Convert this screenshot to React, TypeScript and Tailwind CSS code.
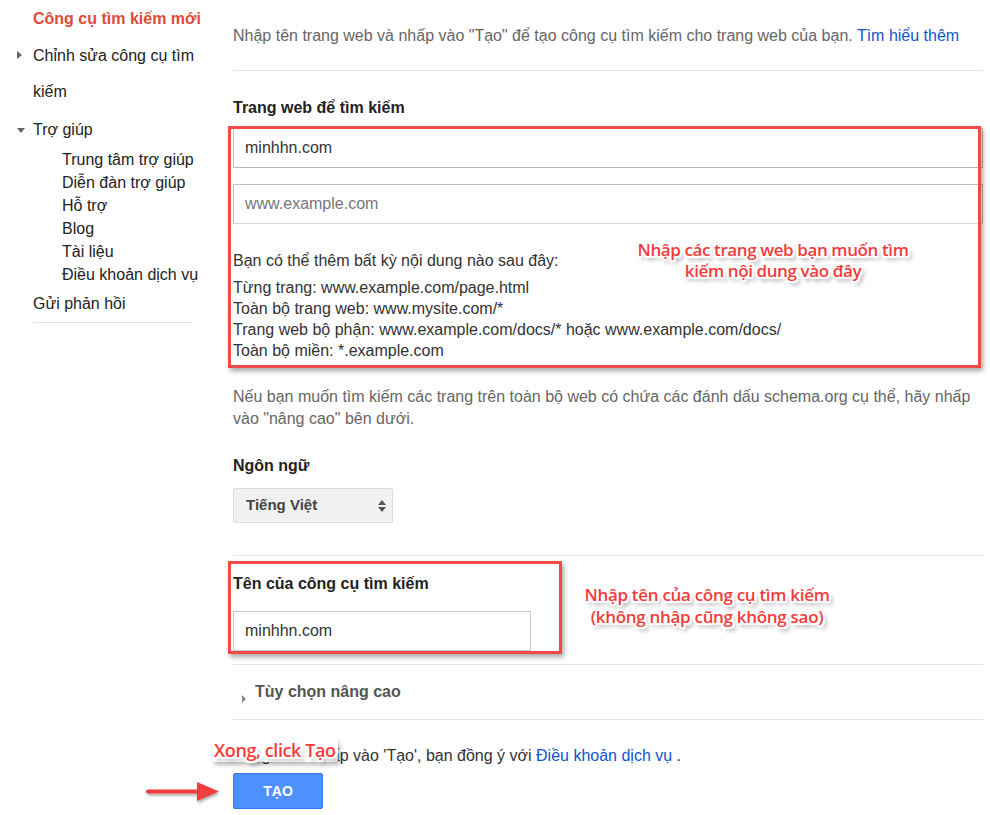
import { Fragment } from "react";

const HELP_LINKS = [
  "Trung tâm trợ giúp",
  "Diễn đàn trợ giúp",
  "Hỗ trợ",
  "Blog",
  "Tài liệu",
  "Điều khoản dịch vụ",
];

const EXAMPLES = [
  "Từng trang: www.example.com/page.html",
  "Toàn bộ trang web: www.mysite.com/*",
  "Trang web bộ phận: www.example.com/docs/* hoặc www.example.com/docs/",
  "Toàn bộ miền: *.example.com",
];

// white halo + soft drop shadow, like the screenshot annotations
const glow =
  "[text-shadow:0_0_1px_#fff,0_0_2px_#fff,2px_0_1px_#fff,-2px_0_1px_#fff,0_2px_1px_#fff,0_-2px_1px_#fff,2px_2px_1px_#fff,-2px_-2px_1px_#fff,2px_-2px_1px_#fff,-2px_2px_1px_#fff,3px_4px_4px_rgba(0,0,0,0.45)]";

function Note({ lines, className }: { lines: string[]; className: string }) {
  return (
    <div
      className={`absolute text-center font-semibold text-[#f23c3c] font-['Open_Sans',sans-serif] whitespace-nowrap ${glow} ${className}`}
    >
      {lines.map((l, i) => (
        <Fragment key={i}>
          {l}
          {i < lines.length - 1 && <br />}
        </Fragment>
      ))}
    </div>
  );
}

function RedBox({ className }: { className: string }) {
  return (
    <div
      className={`absolute border-[3px] border-[#f24848] shadow-[2px_3px_5px_rgba(0,0,0,0.35)] pointer-events-none ${className}`}
    />
  );
}

export default function App() {
  return (
    <div className="w-[990px] h-[815px] bg-white flex font-['Liberation_Sans',Arial,sans-serif] text-[#222] overflow-hidden">
      {/* Sidebar */}
      <div className="w-[233px] shrink-0 pl-[33px] pr-[28px] pt-px">
        <div className="text-[16px] leading-[36px] font-bold text-[#dd4b39]">
          Công cụ tìm kiếm mới
        </div>
        <div className="relative text-[16px] leading-[36px] mt-px">
          <span className="absolute -left-[16px] top-[13px] w-0 h-0 border-y-[4px] border-y-transparent border-l-[5px] border-l-[#666]" />
          Chỉnh sửa công cụ tìm kiếm
        </div>
        <div className="relative text-[16px] leading-[36px] mt-[2px]">
          <span className="absolute -left-[16px] top-[16px] w-0 h-0 border-x-[4px] border-x-transparent border-t-[5px] border-t-[#666]" />
          Trợ giúp
        </div>
        <div className="pl-[29px] flex flex-col">
          {HELP_LINKS.map((l) => (
            <div key={l} className="text-[16px] leading-[23px]">
              {l}
            </div>
          ))}
        </div>
        <div className="text-[16px] leading-[36px]">Gửi phản hồi</div>
        <div className="w-[160px] border-b border-[#e5e5e5]" />
      </div>

      {/* Main */}
      <div className="w-[750px] shrink-0 relative">
        <div className="pt-[26px] pb-[24px] border-b border-[#e5e5e5] text-[16px] leading-[20px] text-[#666]">
          Nhập tên trang web và nhấp vào "Tạo" để tạo công cụ tìm kiếm cho trang web của bạn.{" "}
          <span className="text-[#1155cc]">Tìm hiểu thêm</span>
        </div>

        <div className="pt-[27px] text-[16px] leading-[20px] font-bold">Trang web để tìm kiếm</div>

        <div className="relative mt-[10px]">
          <RedBox className="-left-[5px] -top-[2px] w-[753px] h-[242px]" />
          <div className="h-[40px] border border-[#c0c0c0] border-b-[#b9b9b9] flex items-center px-[11px] text-[16px] text-[#333]">
            minhhn.com
          </div>
          <div className="mt-[16px] h-[40px] border border-[#c0c0c0] border-b-[#d9d9d9] flex items-center px-[11px] text-[16px] text-[#777]">
            www.example.com
          </div>
          <div className="mt-[27px] text-[16px] leading-[20px] text-[#333]">
            Bạn có thể thêm bất kỳ nội dung nào sau đây:
          </div>
          <div className="mt-[6px] text-[16px] leading-[21px] text-[#333]">
            {EXAMPLES.map((e) => (
              <div key={e}>{e}</div>
            ))}
          </div>
          <Note
            lines={["Nhập các trang web bạn muốn tìm", "kiếm nội dung vào đây"]}
            className="left-[400px] top-[111px] w-[280px] text-[17px] leading-[21px] tracking-[-0.4px]"
          />
        </div>

        <div className="mt-[25px] text-[16px] leading-[22px] text-[#666]">
          Nếu bạn muốn tìm kiếm các trang trên toàn bộ web có chứa các đánh dấu schema.org cụ thể, hãy nhấp
          vào "nâng cao" bên dưới.
        </div>

        <div className="mt-[26px] text-[16px] leading-[20px] font-bold">Ngôn ngữ</div>
        <div className="mt-[12px] w-[160px] h-[35px] bg-[#f1f1f1] border border-[#dcdcdc] rounded-[2px] flex items-center justify-between pl-[12px] pr-[6px]">
          <span className="text-[15px] font-bold text-[#444]">Tiếng Việt</span>
          <span className="flex flex-col gap-[2px]">
            <span className="w-0 h-0 border-x-[4px] border-x-transparent border-b-[5px] border-b-[#555]" />
            <span className="w-0 h-0 border-x-[4px] border-x-transparent border-t-[5px] border-t-[#555]" />
          </span>
        </div>

        <div className="mt-[32px] border-t border-[#e5e5e5]" />
        <div className="relative pt-[18px] pb-[13px]">
          <RedBox className="-left-[5px] top-[5px] w-[334px] h-[93px]" />
          <div className="text-[16px] leading-[20px] font-bold">Tên của công cụ tìm kiếm</div>
          <div className="mt-[17px] w-[298px] h-[40px] border border-[#c8c8c8] flex items-center px-[11px] text-[16px] text-[#333]">
            minhhn.com
          </div>
          <Note
            lines={["Nhập tên của công cụ tìm kiếm", "(không nhập cũng không sao)"]}
            className="left-[350px] top-[28px] w-[248px] text-[17px] leading-[22px] tracking-[-0.3px]"
          />
        </div>
        <div className="border-t border-[#e5e5e5] h-[55px] flex items-center relative">
          <span className="absolute left-[9px] top-[30px] w-0 h-0 border-y-[4px] border-y-transparent border-l-[4px] border-l-[#888]" />
          <span className="pl-[22px] text-[16px] font-bold text-[#555]">Tùy chọn nâng cao</span>
        </div>
        <div className="border-t border-[#e5e5e5]" />

        <div className="relative mt-[26px] text-[16px] leading-[20px] text-[#333]">
          Bằng cách nhấp vào 'Tạo', bạn đồng ý với{" "}
          <span className="text-[#1155cc]">Điều khoản dịch vụ</span> .
          <Note
            lines={["Xong, click Tạo"]}
            className="-left-[21px] -top-[7px] text-[18px] leading-[23px] tracking-[-0.4px] bg-white px-[2px] rounded-[3px] shadow-[2px_3px_4px_rgba(0,0,0,0.25)]"
          />
        </div>

        <div className="relative mt-[7px]">
          <button className="w-[90px] h-[36px] bg-[#4d90fe] border border-[#3079ed] rounded-[2px] text-white text-[14px] font-bold">
            TẠO
          </button>
          <svg
            className="absolute -left-[88px] top-[6px]"
            width="78"
            height="26"
            viewBox="0 0 78 26"
          >
            <defs>
              <filter id="s" x="-20%" y="-50%" width="140%" height="200%">
                <feDropShadow dx="1" dy="2" stdDeviation="1.5" floodColor="#000" floodOpacity="0.35" />
              </filter>
            </defs>
            <g filter="url(#s)">
              <path d="M3 12.5 L56 12.5" stroke="#f03c3c" strokeWidth="4" strokeLinecap="round" />
              <path d="M52 3 L74 12.5 L52 22 Z" fill="#f03c3c" />
            </g>
          </svg>
        </div>
      </div>
    </div>
  );
}
